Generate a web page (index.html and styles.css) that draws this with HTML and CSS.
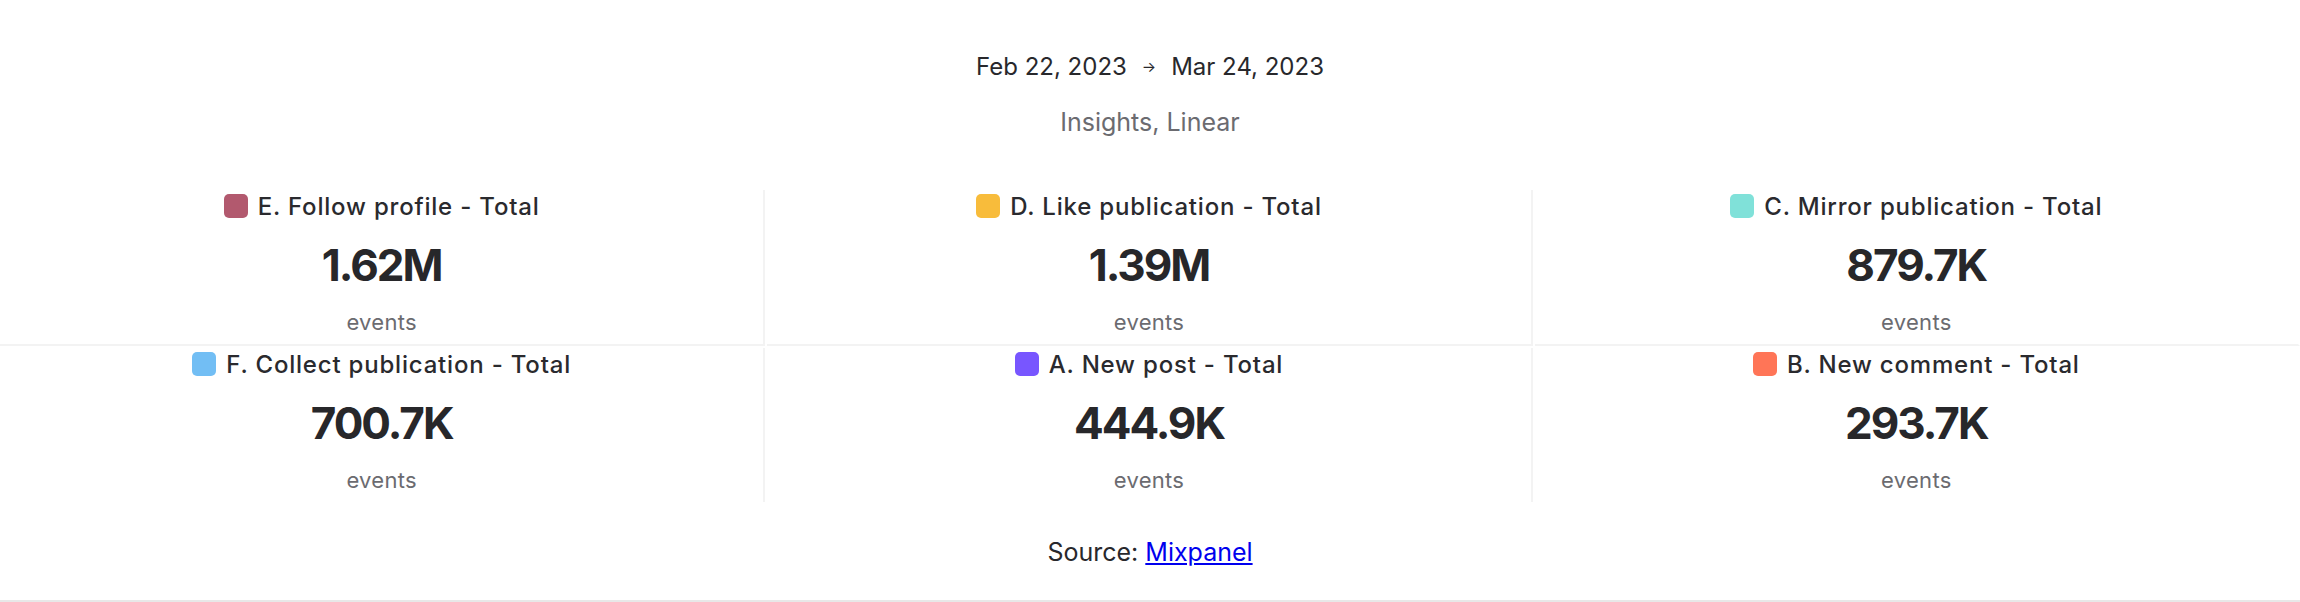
FILE: index.html
```html
<!DOCTYPE html>
<html lang="en">
<head>
<meta charset="utf-8">
<title>Insights</title>
<link rel="stylesheet" href="styles.css">
</head>
<body>
<div class="page">
  <div class="range"><span>Feb 22, 2023</span><span class="arrow">→</span><span>Mar 24, 2023</span></div>
  <div class="subtitle">Insights, Linear</div>
  <div class="grid">
    <div class="cell top">
      <div class="title"><span class="sw c-rose"></span><span>E. Follow profile - Total</span></div>
      <div class="value">1.62M</div>
      <div class="unit">events</div>
    </div>
    <div class="cell top">
      <div class="title"><span class="sw c-yellow"></span><span>D. Like publication - Total</span></div>
      <div class="value">1.39M</div>
      <div class="unit">events</div>
    </div>
    <div class="cell top last">
      <div class="title"><span class="sw c-teal"></span><span>C. Mirror publication - Total</span></div>
      <div class="value">879.7K</div>
      <div class="unit">events</div>
    </div>
    <div class="cell">
      <div class="title"><span class="sw c-blue"></span><span>F. Collect publication - Total</span></div>
      <div class="value">700.7K</div>
      <div class="unit">events</div>
    </div>
    <div class="cell">
      <div class="title"><span class="sw c-purple"></span><span>A. New post - Total</span></div>
      <div class="value">444.9K</div>
      <div class="unit">events</div>
    </div>
    <div class="cell last">
      <div class="title"><span class="sw c-orange"></span><span>B. New comment - Total</span></div>
      <div class="value">293.7K</div>
      <div class="unit">events</div>
    </div>
  </div>
  <div class="source">Source: <a href="#">Mixpanel</a></div>
</div>
</body>
</html>
```

FILE: styles.css
```css
html, body {
  margin: 0;
  padding: 0;
  background: #ffffff;
}

.page {
  font-family: Inter, "Noto Sans", sans-serif;
  color: #28282c;
  padding-top: 49px;
  padding-bottom: 30px;
  border-bottom: 2px solid #e8e8e8;
  text-align: center;
}

.range {
  display: flex;
  justify-content: center;
  align-items: center;
  gap: 15px;
  font-size: 24px;
  line-height: 36px;
}

.arrow {
  font-size: 15px;
}

.subtitle {
  margin-top: 19px;
  font-size: 25px;
  line-height: 36px;
  color: #6b6b70;
}

.grid {
  margin-top: 50px;
  display: grid;
  grid-template-columns: repeat(3, 1fr);
  gap: 2px;
}

.cell {
  display: flex;
  flex-direction: column;
  align-items: center;
  border-right: 2px solid #f3f3f3;
  padding-bottom: 8px;
}

.cell.top {
  border-bottom: 2px solid #f3f3f3;
}

.cell.last {
  border-right-color: transparent;
}

.title {
  display: flex;
  align-items: center;
  gap: 10px;
  height: 32px;
  font-size: 24px;
  font-weight: 500;
  letter-spacing: 0.8px;
  color: #2a2a2e;
}

.sw {
  width: 24px;
  height: 24px;
  border-radius: 5px;
}

.c-rose { background: #b2596e; }
.c-yellow { background: #f8bc3b; }
.c-teal { background: #80e1d9; }
.c-blue { background: #72bef4; }
.c-purple { background: #7856ff; }
.c-orange { background: #ff7557; }

.value {
  margin-top: 15px;
  font-size: 44px;
  line-height: 56px;
  font-weight: 700;
  letter-spacing: -2px;
  font-variant-numeric: proportional-nums;
  color: #27272a;
}

.unit {
  margin-top: 15px;
  font-size: 22px;
  line-height: 28px;
  letter-spacing: 0.3px;
  color: #6b6b70;
}

.source {
  margin-top: 32px;
  font-size: 25px;
  line-height: 36px;
}

.source a {
  color: #0000ee;
  text-decoration: underline;
}
```
